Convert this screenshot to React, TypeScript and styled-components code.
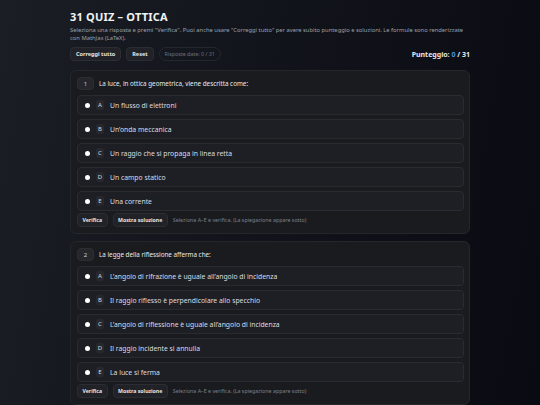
import React from "react";
import styled, { createGlobalStyle } from "styled-components";

const Global = createGlobalStyle`
  html, body { margin: 0; padding: 0; }
  body {
    min-height: 405px;
    background: linear-gradient(100deg, #1b1e25 0%, #12141b 45%, #0a0b12 100%);
    font-family: "Noto Sans", "Open Sans", sans-serif;
    color: #e6e7ea;
    overflow: hidden;
  }
`;

const Page = styled.div`
  width: 400px;
  margin-left: 70px;
  padding-top: 10px;
`;

const Title = styled.h1`
  margin: 0;
  font-size: 11px;
  line-height: 14px;
  font-weight: 700;
  letter-spacing: 0.2px;
  color: #f2f3f5;
`;

const Desc = styled.p`
  margin: 2px 0 0;
  font-size: 5.8px;
  line-height: 8px;
  color: #9ba0a9;
`;

const Toolbar = styled.div`
  margin-top: 5px;
  display: flex;
  align-items: center;
  gap: 5px;
  height: 14px;
`;

const Btn = styled.button<{ $small?: boolean }>`
  height: 14px;
  padding: 0 ${(p) => (p.$small ? 4.5 : 5)}px;
  border-radius: 4px;
  border: 1px solid #2b2d33;
  background: #202228;
  color: #e4e5e8;
  font-family: inherit;
  font-size: ${(p) => (p.$small ? 5.2 : 5.5)}px;
  font-weight: 700;
  display: flex;
  align-items: center;
  cursor: pointer;
`;

const Pill = styled.span`
  height: 14px;
  padding: 0 5px;
  border-radius: 7px;
  border: 1px solid #25272d;
  box-sizing: border-box;
  display: flex;
  align-items: center;
  font-size: 5.3px;
  color: #6d727b;
`;

const Score = styled.div`
  margin-left: auto;
  font-size: 7px;
  font-weight: 700;
  color: #e6e7ea;
`;

const Zero = styled.span`
  color: #4a8fe6;
`;

const Card = styled.section`
  margin-top: 9px;
  padding: 6px 5px 6px 6px;
  border-radius: 6px;
  border: 1px solid #25262b;
  background: #1a1b1f;
  box-sizing: border-box;
  & + & {
    margin-top: 7px;
  }
`;

const QHead = styled.div`
  display: flex;
  align-items: center;
  gap: 5px;
  height: 13px;
`;

const NumBadge = styled.span`
  width: 17px;
  height: 13px;
  border-radius: 4px;
  background: #26272c;
  border: 1px solid #2d2e33;
  box-sizing: border-box;
  display: flex;
  align-items: center;
  justify-content: center;
  font-size: 6px;
  color: #c9cbd0;
`;

const QText = styled.span`
  font-size: 6.3px;
  color: #e8e9ec;
`;

const Options = styled.div`
  margin-top: 5px;
  display: flex;
  flex-direction: column;
  gap: 4px;
`;

const Option = styled.label`
  height: 20px;
  box-sizing: border-box;
  border-radius: 4px;
  border: 1px solid #2a2b31;
  background: #1e1f24;
  display: flex;
  align-items: center;
  padding-left: 7px;
`;

const Dot = styled.span`
  width: 5px;
  height: 5px;
  border-radius: 50%;
  background: #ffffff;
  flex: none;
`;

const Letter = styled.span`
  margin-left: 6px;
  width: 8px;
  height: 10px;
  border-radius: 2px;
  background: #27282e;
  display: flex;
  align-items: center;
  justify-content: center;
  font-size: 6px;
  color: #d8d9dd;
  flex: none;
`;

const OText = styled.span`
  margin-left: 6px;
  font-size: 6.8px;
  color: #dcdde1;
`;

const Actions = styled.div`
  margin-top: 2px;
  display: flex;
  align-items: center;
  gap: 5px;
  height: 14px;
`;

const Hint = styled.span`
  font-size: 5.3px;
  color: #7c818a;
`;

type Q = { n: number; q: string; opts: string[] };

const questions: Q[] = [
  {
    n: 1,
    q: "La luce, in ottica geometrica, viene descritta come:",
    opts: [
      "Un flusso di elettroni",
      "Un’onda meccanica",
      "Un raggio che si propaga in linea retta",
      "Un campo statico",
      "Una corrente",
    ],
  },
  {
    n: 2,
    q: "La legge della riflessione afferma che:",
    opts: [
      "L’angolo di rifrazione è uguale all’angolo di incidenza",
      "Il raggio riflesso è perpendicolare allo specchio",
      "L’angolo di riflessione è uguale all’angolo di incidenza",
      "Il raggio incidente si annulla",
      "La luce si ferma",
    ],
  },
];

const letters = ["A", "B", "C", "D", "E"];

export default function App() {
  return (
    <>
      <Global />
      <Page>
        <Title>31 QUIZ – OTTICA</Title>
        <Desc>
          Seleziona una risposta e premi "Verifica". Puoi anche usare "Correggi tutto" per avere subito
          punteggio e soluzioni. Le formule sono renderizzate con MathJax (LaTeX).
        </Desc>
        <Toolbar>
          <Btn>Correggi tutto</Btn>
          <Btn>Reset</Btn>
          <Pill>Risposte date: 0 / 31</Pill>
          <Score>
            Punteggio: <Zero>0</Zero> / 31
          </Score>
        </Toolbar>
        {questions.map((q) => (
          <Card key={q.n}>
            <QHead>
              <NumBadge>{q.n}</NumBadge>
              <QText>{q.q}</QText>
            </QHead>
            <Options>
              {q.opts.map((o, i) => (
                <Option key={i}>
                  <Dot />
                  <Letter>{letters[i]}</Letter>
                  <OText>{o}</OText>
                </Option>
              ))}
            </Options>
            <Actions>
              <Btn $small>Verifica</Btn>
              <Btn $small>Mostra soluzione</Btn>
              <Hint>Seleziona A–E e verifica. (La spiegazione appare sotto)</Hint>
            </Actions>
          </Card>
        ))}
      </Page>
    </>
  );
}
